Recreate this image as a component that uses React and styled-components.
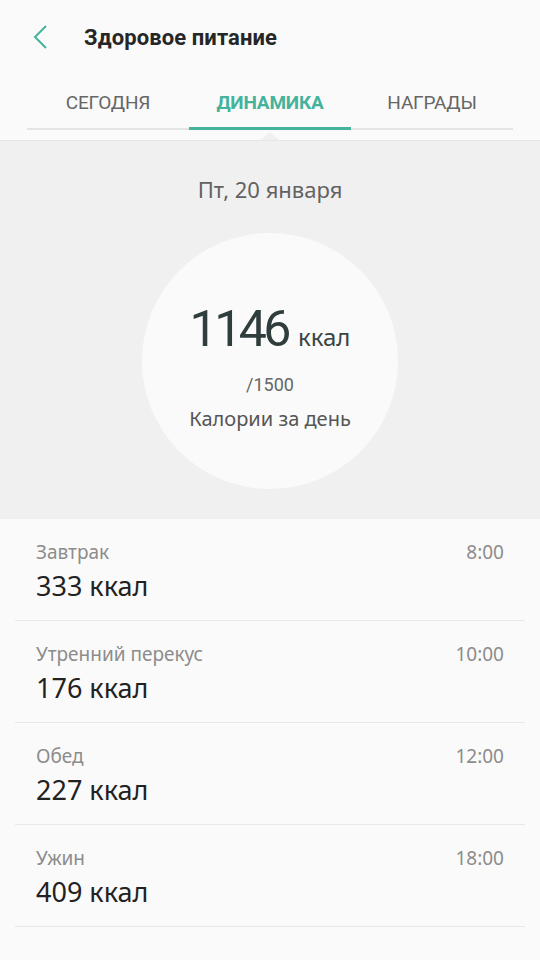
import React from 'react';
import styled, { createGlobalStyle } from 'styled-components';

const Global = createGlobalStyle`
  body {
    margin: 0;
    background: #fafafa;
    font-family: Roboto, "Noto Sans", sans-serif;
  }
`;

const Page = styled.div`
  width: 540px;
  min-height: 960px;
  background: #fafafa;
`;

const Header = styled.div`
  height: 76px;
  display: flex;
  align-items: center;
  padding-left: 32px;
`;

const Back = styled.svg`
  width: 16px;
  height: 26px;
  margin-top: -2px;
`;

const Title = styled.h1`
  margin: -2px 0 0 36px;
  font-size: 22px;
  font-weight: 700;
  color: #262626;
  letter-spacing: 0.1px;
`;

const Tabs = styled.div`
  margin: 0 27px;
  display: grid;
  grid-template-columns: repeat(3, 1fr);
  border-bottom: 2px solid #e4e4e4;
`;

const Tab = styled.div`
  height: 52px;
  display: flex;
  align-items: center;
  justify-content: center;
  font-size: 19px;
  letter-spacing: -0.2px;
  font-weight: ${p => (p.$active ? 700 : 400)};
  color: ${p => (p.$active ? '#45b39c' : '#666')};
  box-shadow: ${p => (p.$active ? 'inset 0 -3px 0 #45b39c' : 'none')};
  margin-bottom: -2px;
  padding-bottom: 2px;
`;

const Summary = styled.section`
  position: relative;
  margin-top: 10px;
  height: 378px;
  background: #f0f0f0;
  border-top: 1px solid #e6e6e6;
  display: flex;
  flex-direction: column;
  align-items: center;
`;

const Notch = styled.div`
  position: absolute;
  top: -9px;
  left: 261px;
  width: 0;
  height: 0;
  border-left: 9px solid transparent;
  border-right: 9px solid transparent;
  border-bottom: 8px solid #f0f0f0;
`;

const DateLabel = styled.div`
  margin-top: 33px;
  font-family: "Noto Sans", sans-serif;
  font-size: 22px;
  line-height: 30px;
  color: #626262;
`;

const Circle = styled.div`
  margin-top: 29px;
  width: 256px;
  height: 256px;
  border-radius: 50%;
  background: #fafafa;
  display: flex;
  flex-direction: column;
  align-items: center;
`;

const Total = styled.div`
  margin-top: 66px;
  display: flex;
  align-items: baseline;
  color: #2f3d3c;
`;

const Big = styled.span`
  font-size: 50px;
  line-height: 60px;
  letter-spacing: -3.5px;
`;

const Unit = styled.span`
  margin-left: 10px;
  font-family: "Noto Sans", sans-serif;
  font-size: 24px;
  color: #3a4645;
`;

const Goal = styled.div`
  margin-top: 14px;
  font-size: 18px;
  line-height: 24px;
  color: #666;
`;

const Caption = styled.div`
  margin-top: 8px;
  font-family: "Noto Sans", sans-serif;
  font-size: 20px;
  line-height: 28px;
  color: #555;
`;

const List = styled.div`
  margin: 0 15px;
  font-family: "Noto Sans", sans-serif;
`;

const Row = styled.div`
  padding: 20px 21px 16px;
  border-bottom: 1px solid #e8e8e8;
`;

const RowTop = styled.div`
  display: flex;
  justify-content: space-between;
  font-size: 19px;
  line-height: 26px;
  color: #8c8c8c;
`;

const Value = styled.div`
  margin-top: 3px;
  font-size: 27px;
  line-height: 36px;
  color: #222;
`;

const meals = [
  { name: 'Завтрак', time: '8:00', kcal: 333 },
  { name: 'Утренний перекус', time: '10:00', kcal: 176 },
  { name: 'Обед', time: '12:00', kcal: 227 },
  { name: 'Ужин', time: '18:00', kcal: 409 },
];

export default function App() {
  return (
    <Page>
      <Global />
      <Header>
        <Back viewBox="0 0 16 26">
          <path d="M14 2 L3 13 L14 24" fill="none" stroke="#45b39c" strokeWidth="2" />
        </Back>
        <Title>Здоровое питание</Title>
      </Header>
      <Tabs>
        <Tab>СЕГОДНЯ</Tab>
        <Tab $active>ДИНАМИКА</Tab>
        <Tab>НАГРАДЫ</Tab>
      </Tabs>
      <Summary>
        <Notch />
        <DateLabel>Пт, 20 января</DateLabel>
        <Circle>
          <Total>
            <Big>1146</Big>
            <Unit>ккал</Unit>
          </Total>
          <Goal>/1500</Goal>
          <Caption>Калории за день</Caption>
        </Circle>
      </Summary>
      <List>
        {meals.map(m => (
          <Row key={m.name}>
            <RowTop>
              <span>{m.name}</span>
              <span>{m.time}</span>
            </RowTop>
            <Value>{m.kcal} ккал</Value>
          </Row>
        ))}
      </List>
    </Page>
  );
}
